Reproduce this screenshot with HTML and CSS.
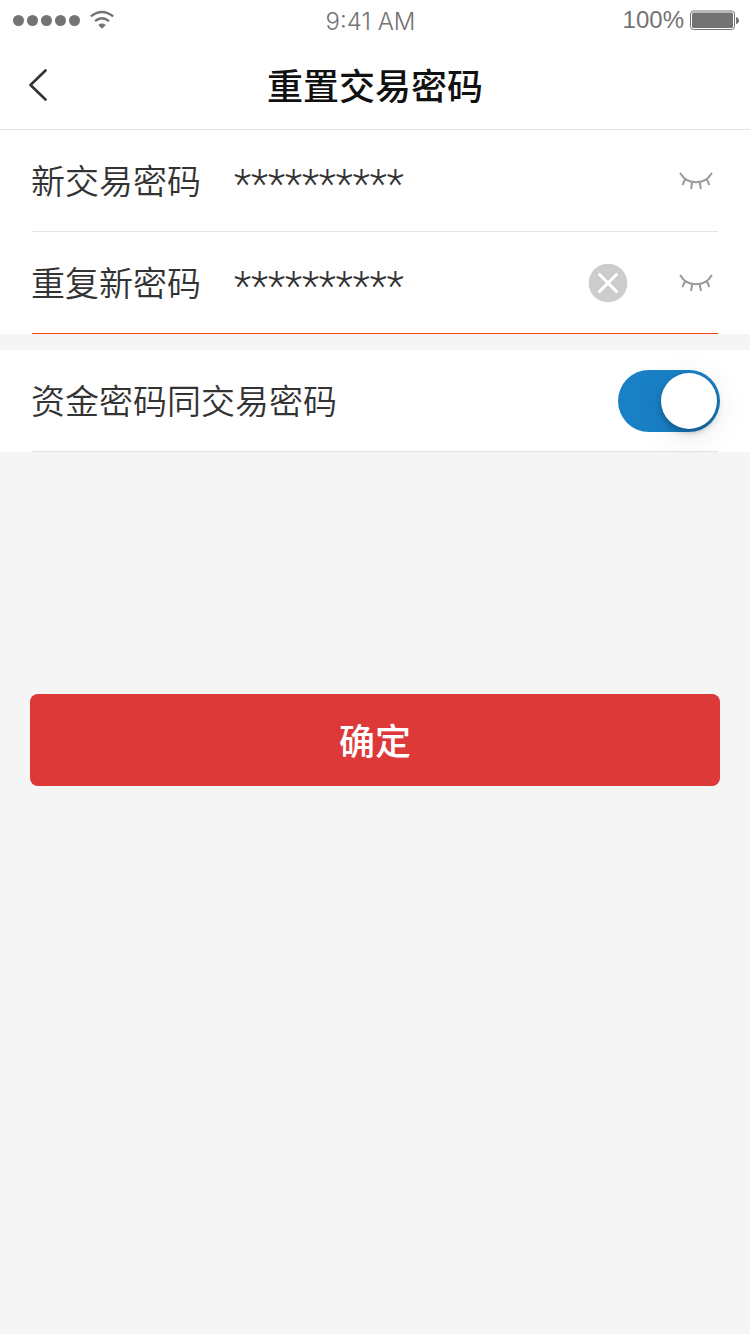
FILE: index.html
```html
<!DOCTYPE html>
<html lang="zh-CN">
<head>
<meta charset="utf-8">
<meta name="viewport" content="width=device-width, initial-scale=1">
<title>重置交易密码</title>
<link rel="stylesheet" href="styles.css">
</head>
<body>
<header class="top">
  <div class="status">
    <div class="status-left">
      <svg class="signal" width="68" height="12" viewBox="0 0 68 12" aria-hidden="true"><circle cx="6.500" cy="6.500" r="5.500"/><circle cx="20.500" cy="6.500" r="5.500"/><circle cx="34.500" cy="6.500" r="5.500"/><circle cx="48.500" cy="6.500" r="5.500"/><circle cx="62.500" cy="6.500" r="5.500"/></svg>
      <svg class="wifi" width="24" height="20" viewBox="0 0 24 20" aria-hidden="true"><path d="M.8 6.400Q12 -2.600 23.200 6.400M5 11.200Q12 5.400 19 11.200"/><path class="wifi-dot" d="M8.200 15Q12 12.200 15.800 15L12 18.800Z"/></svg>
    </div>
    <span class="time">9:41 AM</span>
    <div class="status-right">
      <span>100%</span>
      <svg class="battery" width="49" height="20" viewBox="0 0 49 20" aria-hidden="true"><rect class="battery-case" x=".5" y="1" width="44" height="18.500" rx="3"/><rect x="2" y="2.500" width="41" height="15.500" rx="1.500"/><path d="M46 7Q49 8 49 10.500T46 14Z"/></svg>
    </div>
  </div>
  <nav class="nav">
    <button class="back" type="button" aria-label="返回"><svg width="20" height="32" viewBox="0 0 20 32"><path d="M17.500 1.500L2.500 16L17.500 30.500"/></svg></button>
    <h1 class="title">重置交易密码</h1>
  </nav>
</header>
<main>
  <form class="form">
    <section class="group">
      <div class="row">
        <label class="label" for="new-password">新交易密码</label>
        <input class="field" id="new-password" type="text" value="**********" autocomplete="off">
        <button class="eye" type="button" aria-label="显示密码"><svg width="34" height="18" viewBox="0 0 34 18"><path d="M1.500 1.500Q6.500 10.200 17 10.200T32.500 1.500M6 7.200L3.800 12.300M13.200 9.800L12.200 16.200M20.600 9.800L21.800 16.200M28 7.200L30 12.300"/></svg></button>
      </div>
      <div class="row row-active">
        <label class="label" for="repeat-password">重复新密码</label>
        <input class="field" id="repeat-password" type="text" value="**********" autocomplete="off">
        <button class="clear" type="button" aria-label="清除"><svg width="40" height="40" viewBox="0 0 40 40"><circle cx="20" cy="20" r="19.300"/><path d="M11.500 11.500L28.500 28.500M28.500 11.500L11.500 28.500"/></svg></button>
        <button class="eye" type="button" aria-label="显示密码"><svg width="34" height="18" viewBox="0 0 34 18"><path d="M1.500 1.500Q6.500 10.200 17 10.200T32.500 1.500M6 7.200L3.800 12.300M13.200 9.800L12.200 16.200M20.600 9.800L21.800 16.200M28 7.200L30 12.300"/></svg></button>
      </div>
    </section>
    <section class="group">
      <div class="row row-switch">
        <label class="label" for="same-password">资金密码同交易密码</label>
        <input class="switch" id="same-password" type="checkbox" role="switch" checked>
      </div>
    </section>
    <button class="submit" type="submit">确定</button>
  </form>
</main>
</body>
</html>
```
FILE: styles.css
```css
* {
  box-sizing: border-box;
}

body {
  margin: 0;
  min-height: 100vh;
  background: #f5f5f5;
  color: #333;
  font-family: "Noto Sans CJK SC", sans-serif;
}

button {
  padding: 0;
  border: 0;
  background: none;
  cursor: pointer;
}

svg {
  display: block;
}

.top {
  background: #fff;
  border-bottom: 1px solid #e5e5e5;
}

.status {
  display: grid;
  grid-template-columns: 1fr auto 1fr;
  align-items: center;
  height: 40px;
  padding: 0 11px 0 12px;
  color: #737373;
  font: 300 24px/36px Inter, sans-serif;
}

.status-left,
.status-right {
  display: flex;
  align-items: center;
}

.status-left {
  gap: 10px;
}

.status-right {
  justify-content: flex-end;
  gap: 6px;
  font-family: "Liberation Sans", sans-serif;
}

.time {
  padding: 4px 10px 0 0;
}

.signal,
.battery,
.wifi-dot {
  fill: #737373;
}

.wifi {
  fill: none;
  stroke: #737373;
  stroke-width: 2.4;
}

.wifi-dot {
  fill: #737373;
  stroke: none;
}

.battery-case {
  fill: none;
  stroke: #737373;
}

.nav {
  display: grid;
  grid-template-columns: 1fr auto 1fr;
  align-items: center;
  height: 89px;
  padding: 0 28px;
}

.back {
  justify-self: start;
}

.back svg {
  fill: none;
  stroke: #333;
  stroke-width: 2.6;
  stroke-linecap: round;
  stroke-linejoin: round;
}

.title {
  margin: 0;
  padding-bottom: 2px;
  color: #111;
  font-size: 36px;
  font-weight: 500;
  line-height: 52px;
}

.form {
  display: flex;
  flex-direction: column;
  gap: 16px;
}

.group {
  padding: 0 32px;
  background: #fff;
}

.row {
  display: flex;
  align-items: center;
  height: 102px;
  padding-right: 5px;
  border-bottom: 1px solid #e5e5e5;
}

.row-active {
  border-bottom-color: #ec431c;
}

.row-switch {
  justify-content: space-between;
  padding-right: 0;
}

.label {
  flex: none;
  margin-left: -1px;
  padding-bottom: 2px;
  font-size: 34px;
  font-weight: 350;
  line-height: 50px;
}

.field {
  flex: 1;
  min-width: 0;
  height: 60px;
  margin-left: 33px;
  padding: 8px 0 0;
  border: 0;
  outline: 0;
  background: none;
  color: #333;
  font: 300 40px/52px Roboto, sans-serif;
}

.clear {
  margin-right: 51px;
}

.clear circle {
  fill: #ccc;
}

.clear path {
  stroke: #fff;
  stroke-width: 3;
  stroke-linecap: round;
}

.eye svg {
  fill: none;
  stroke: #999;
  stroke-width: 2;
  stroke-linecap: round;
}

.switch {
  appearance: none;
  display: flex;
  align-items: center;
  width: 102px;
  height: 62px;
  margin: 0 -2px 0 0;
  padding: 0 3px;
  border-radius: 31px;
  background: #ccc;
  cursor: pointer;
}

.switch::before {
  content: "";
  width: 56px;
  height: 56px;
  border-radius: 50%;
  background: #fff;
  box-shadow: 0 4px 6px rgba(0, 0, 0, .25), 0 6px 32px rgba(0, 0, 0, .1);
}

.switch:checked {
  justify-content: flex-end;
  background: #1980c6;
}

.submit {
  height: 92px;
  margin: 226px 30px 0;
  padding-bottom: 2px;
  border-radius: 8px;
  background: #dd3939;
  color: #fff;
  font: 500 36px/52px "Noto Sans CJK SC", sans-serif;
}
```
